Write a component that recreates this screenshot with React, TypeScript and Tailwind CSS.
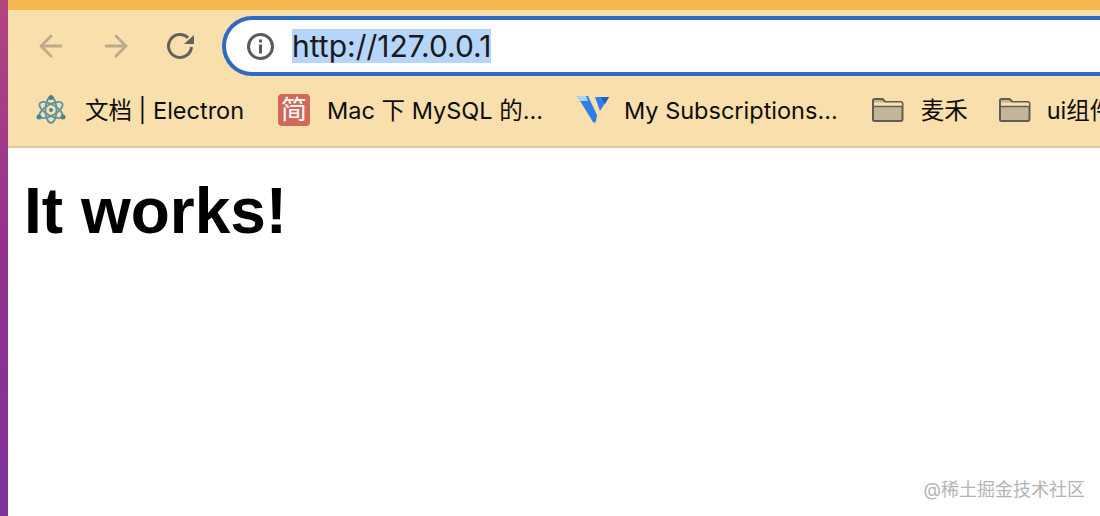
import { ArrowLeft, ArrowRight } from "lucide-react";

const sans = "font-['Inter','Noto_Sans_CJK_SC',sans-serif]";

function ElectronIcon() {
  return (
    <svg width="32" height="32" viewBox="0 0 32 32" fill="none" stroke="#5d93a3" strokeWidth="1.8">
      <ellipse cx="16" cy="16" rx="13" ry="5.5" transform="rotate(30 16 16)" />
      <ellipse cx="16" cy="16" rx="13" ry="5.5" transform="rotate(90 16 16)" />
      <ellipse cx="16" cy="16" rx="13" ry="5.5" transform="rotate(150 16 16)" />
      <circle cx="16" cy="16" r="2" fill="#4a8296" stroke="none" />
      <circle cx="16" cy="3.5" r="2.5" fill="#4a8296" stroke="none" />
      <circle cx="4" cy="23" r="2.5" fill="#4a8296" stroke="none" />
      <circle cx="28" cy="23" r="2.5" fill="#4a8296" stroke="none" />
    </svg>
  );
}

function VuetifyIcon() {
  return (
    <svg width="34" height="30" viewBox="0 0 34 30">
      <path d="M1 1h11l9 19-1 6q-1 3-3 1z" fill="#2f7de8" />
      <path d="M1 1h9l2 5h-8z" fill="#a8d8f5" />
      <path d="M19 2h14l-9 14z" fill="#2f7de8" />
      <path d="M25 2h8l-4 7z" fill="#1c5fc0" />
    </svg>
  );
}

function FolderIcon() {
  return (
    <svg width="33" height="26" viewBox="0 0 33 26" fill="none">
      <path
        d="M2 3.500a1.500 1.500 0 0 1 1.500-1.500h8l3 3h15a2 2 0 0 1 2 2v15a2 2 0 0 1-2 2h-26a1.500 1.500 0 0 1-1.500-1.500z"
        fill="#c5b598"
        stroke="#5f5d58"
        strokeWidth="2"
      />
      <path d="M3 5.500h26.500a1.500 1.500 0 0 1 1.500 1.500v2h-28z" fill="#f8dfac" />
      <path d="M2 9.500h29" stroke="#5f5d58" strokeWidth="1.500" />
    </svg>
  );
}

function ReloadIcon() {
  return (
    <svg className="ml-[33px] shrink-0" width="30" height="30" viewBox="0 0 30 30" fill="none">
      <path d="M22.100 6.800A11.500 11.500 0 1 0 25.500 16" stroke="#63615d" strokeWidth="3" />
      <path d="M28 4v9h-10z" fill="#63615d" />
    </svg>
  );
}

function InfoIcon() {
  return (
    <svg className="shrink-0" width="27" height="27" viewBox="0 0 27 27" fill="none">
      <circle cx="13.500" cy="13.500" r="12" stroke="#5a5a5a" strokeWidth="3" />
      <rect x="12" y="6.500" width="3" height="3" fill="#5a5a5a" />
      <rect x="12" y="11.500" width="3" height="9" fill="#5a5a5a" />
    </svg>
  );
}

function Bookmark({ icon, label, className }: { icon: React.ReactNode; label: string; className: string }) {
  return (
    <div className={`flex shrink-0 items-center ${className}`}>
      {icon}
      <span className="mt-[1px] text-[23.5px] leading-none whitespace-nowrap text-[#0d0d0b]">{label}</span>
    </div>
  );
}

export default function App() {
  return (
    <div className={`flex h-[516px] w-[1100px] overflow-hidden bg-white ${sans}`}>
      <div className="h-full w-2 shrink-0 bg-gradient-to-b from-[#b4457f] via-[#93308e] to-[#7f349c]" />

      <div className="flex min-w-0 flex-1 flex-col">
        <div className="h-[10px] shrink-0 bg-[#f6b650]" />

        {/* toolbar */}
        <div className="flex h-[72px] shrink-0 items-center bg-[#f9dfac] pl-[26px]">
          <ArrowLeft className="h-[34px] w-[34px] shrink-0 text-[#bcab8d]" strokeWidth={2} />
          <ArrowRight className="ml-[31px] h-[34px] w-[34px] shrink-0 text-[#bcab8d]" strokeWidth={2} />
          <ReloadIcon />
          <div className="ml-[26px] flex h-[60px] w-[900px] shrink-0 items-center rounded-l-[30px] border-4 border-r-0 border-[#2f69c4] bg-white pl-[21px]">
            <InfoIcon />
            <span className="ml-[18px] bg-[#b5d5fb] text-[30px] leading-[34px] text-[#1a1a1a]">http://127.0.0.1</span>
          </div>
        </div>

        {/* bookmarks */}
        <div className="flex h-[66px] shrink-0 items-center overflow-hidden border-b-2 border-[#dfcb9c] bg-[#f9dfac] pb-[8px] pl-[27px]">
          <Bookmark icon={<ElectronIcon />} label="文档 | Electron" className="gap-[18px]" />
          <Bookmark
            icon={
              <div className="flex h-8 w-8 items-center justify-center rounded-[4px] bg-[#d0695a] text-[26px] leading-none text-white">
                简
              </div>
            }
            label="Mac 下 MySQL 的..."
            className="ml-[34px] gap-[17px]"
          />
          <Bookmark icon={<VuetifyIcon />} label="My Subscriptions..." className="ml-[33px] gap-[14px]" />
          <Bookmark icon={<FolderIcon />} label="麦禾" className="ml-[33px] gap-[17px]" />
          <Bookmark icon={<FolderIcon />} label="ui组件" className="ml-[30px] gap-[16px]" />
        </div>

        {/* page */}
        <div className="relative flex-1 bg-white pl-4">
          <h1 className="mt-[28px] font-['Liberation_Sans'] text-[64px] leading-[70px] font-bold text-black">It works!</h1>
          <span className="absolute right-[15px] bottom-[17px] text-[18px] leading-none text-[#b4b4b4]">@稀土掘金技术社区</span>
        </div>
      </div>
    </div>
  );
}
